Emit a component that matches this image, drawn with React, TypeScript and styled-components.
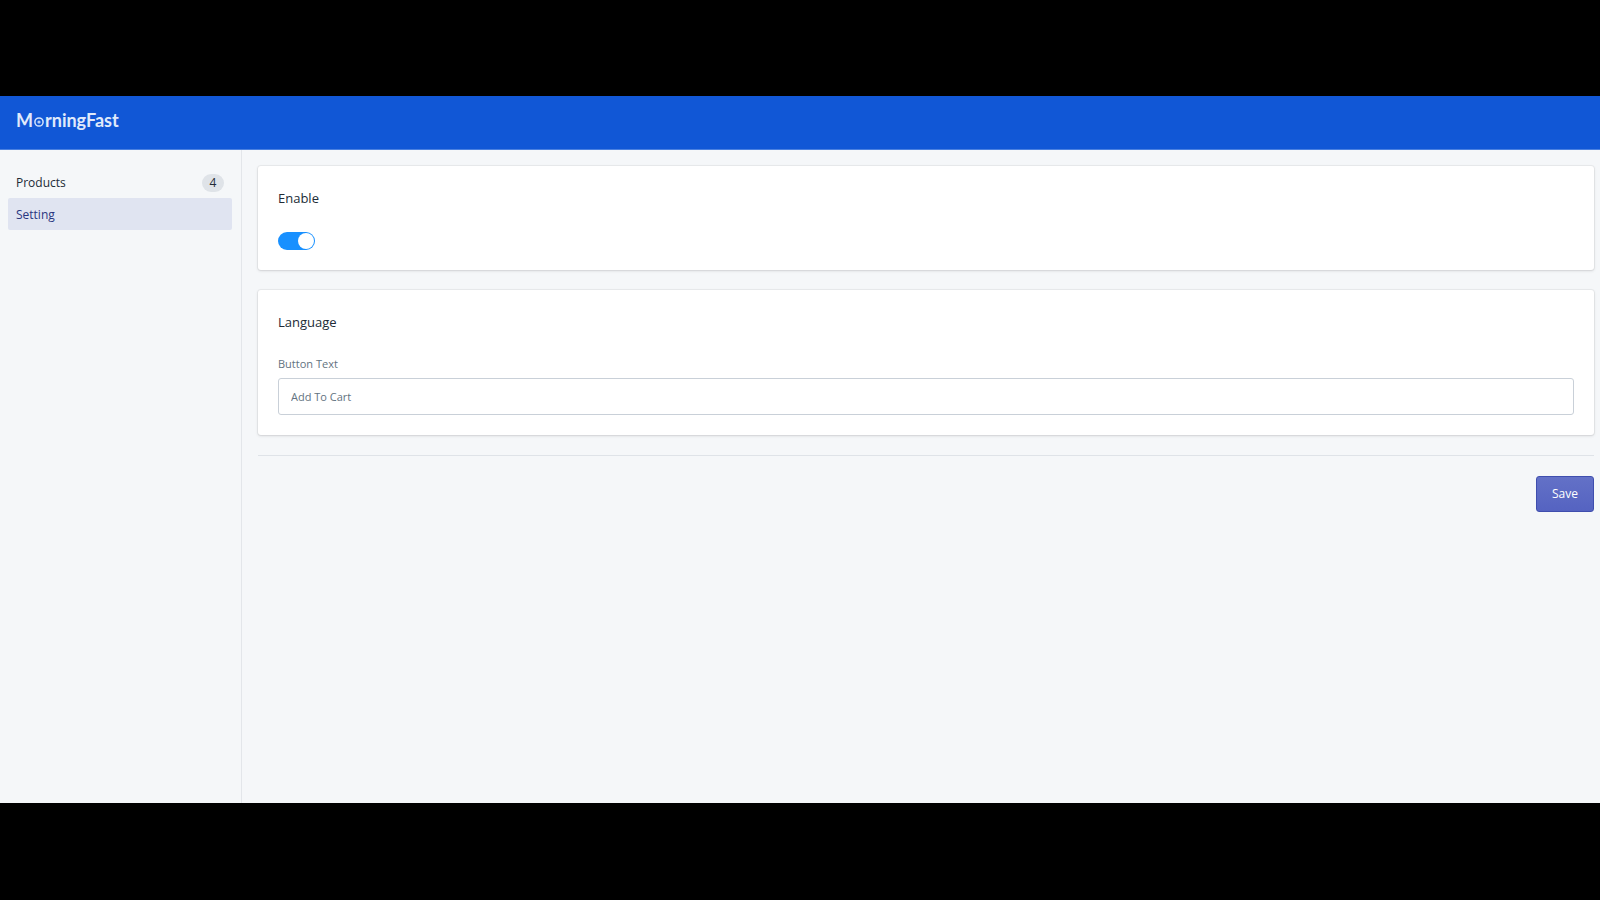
import React, { useState } from "react";
import styled, { createGlobalStyle } from "styled-components";

const GlobalStyle = createGlobalStyle`
  *, *::before, *::after { box-sizing: border-box; }
  body {
    margin: 0;
    background: #000;
    color: #212b36;
    font-family: "Open Sans", "Noto Sans", sans-serif;
    font-size: 12px;
    line-height: 20px;
  }
`;

const Screen = styled.div`
  display: flex;
  flex-direction: column;
  min-height: 100vh;
  padding: 96px 0 97px;
`;

const TopBar = styled.header`
  display: flex;
  align-items: center;
  height: 54px;
  padding: 0 16px 6px;
  background: #1157d6;
  border-bottom: 1px solid #4a80e0;
`;

const Logo = styled.a`
  display: flex;
  align-items: baseline;
  color: #e0eafb;
  font-family: Lato, sans-serif;
  font-size: 18px;
  font-weight: 700;
  line-height: 24px;
  text-decoration: none;
`;

const LogoRing = styled.svg`
  width: 10px;
  height: 10px;
  margin: 0 1px;
`;

const Body = styled.div`
  display: flex;
  flex: 1;
  background: #f5f7f9;
`;

const Sidebar = styled.nav`
  flex: none;
  width: 242px;
  padding: 16px 9px 16px 8px;
  border-right: 1px solid #e3e6ea;
`;

const NavItem = styled.a<{ $active?: boolean }>`
  display: flex;
  align-items: center;
  justify-content: space-between;
  height: 32px;
  padding: 2px 8px 0;
  border-radius: 2px;
  background: ${(p) => (p.$active ? "#e0e4f1" : "transparent")};
  color: ${(p) => (p.$active ? "#2a3680" : "#212b36")};
  font-weight: 500;
  text-decoration: none;
`;

const Badge = styled.span`
  width: 22px;
  border-radius: 9px;
  background: #dfe3e8;
  line-height: 18px;
  text-align: center;
`;

const Main = styled.main`
  display: flex;
  flex: 1;
  flex-direction: column;
  gap: 20px;
  padding: 16px 6px 16px 16px;
`;

const Card = styled.section`
  display: flex;
  flex-direction: column;
  align-items: flex-start;
  padding: 20px;
  border-radius: 3px;
  background: #fff;
  box-shadow: 0 0 0 1px rgba(63, 63, 68, 0.06), 0 1px 3px rgba(63, 63, 68, 0.16);
`;

const CardTitle = styled.h2`
  margin: 0 0 20px;
  font-size: 13px;
  font-weight: 500;
  line-height: 24px;
`;

const Switch = styled.input`
  appearance: none;
  display: flex;
  width: 37px;
  height: 18px;
  margin: 2px 0 0;
  padding: 1px;
  border-radius: 9px;
  background: #bfbfbf;
  cursor: pointer;

  &::before {
    content: "";
    width: 16px;
    height: 16px;
    border-radius: 50%;
    background: #fff;
  }
  &:checked {
    justify-content: flex-end;
    background: #1890ff;
  }
`;

const Label = styled.label`
  margin-bottom: 4px;
  color: #637381;
  font-size: 11px;
`;

const TextInput = styled.input`
  width: 100%;
  height: 37px;
  padding: 0 12px;
  border: 1px solid #c9d0d8;
  border-radius: 3px;
  background: #fff;
  color: #637381;
  font: inherit;
  font-size: 11px;
`;

const Footer = styled.footer`
  display: flex;
  justify-content: flex-end;
  padding-top: 20px;
  border-top: 1px solid #dfe3e8;
`;

const SaveButton = styled.button`
  min-width: 58px;
  height: 36px;
  padding: 0 12px;
  border: 1px solid #3f4eae;
  border-radius: 3px;
  background: linear-gradient(#6371c7, #5563c1);
  color: #fff;
  font: inherit;
  cursor: pointer;
`;

export default function App() {
  const [enabled, setEnabled] = useState(true);
  const [text, setText] = useState("Add To Cart");

  return (
    <Screen>
      <GlobalStyle />
      <TopBar>
        <Logo href="#" aria-label="MorningFast">
          M
          <LogoRing viewBox="0 0 10 10" aria-hidden="true">
            <circle cx="5" cy="5" r="4.1" fill="none" stroke="#d5e3fb" strokeWidth="1.5" />
            <circle cx="5" cy="5" r="1.6" fill="#b5cdf7" />
          </LogoRing>
          rningFast
        </Logo>
      </TopBar>
      <Body>
        <Sidebar>
          <NavItem href="#products">
            Products <Badge>4</Badge>
          </NavItem>
          <NavItem href="#setting" $active aria-current="page">
            Setting
          </NavItem>
        </Sidebar>
        <Main>
          <Card>
            <CardTitle id="enable-title">Enable</CardTitle>
            <Switch
              type="checkbox"
              role="switch"
              aria-labelledby="enable-title"
              checked={enabled}
              onChange={(e) => setEnabled(e.target.checked)}
            />
          </Card>
          <Card>
            <CardTitle>Language</CardTitle>
            <Label htmlFor="button-text">Button Text</Label>
            <TextInput
              id="button-text"
              type="text"
              value={text}
              onChange={(e) => setText(e.target.value)}
            />
          </Card>
          <Footer>
            <SaveButton type="button">Save</SaveButton>
          </Footer>
        </Main>
      </Body>
    </Screen>
  );
}
